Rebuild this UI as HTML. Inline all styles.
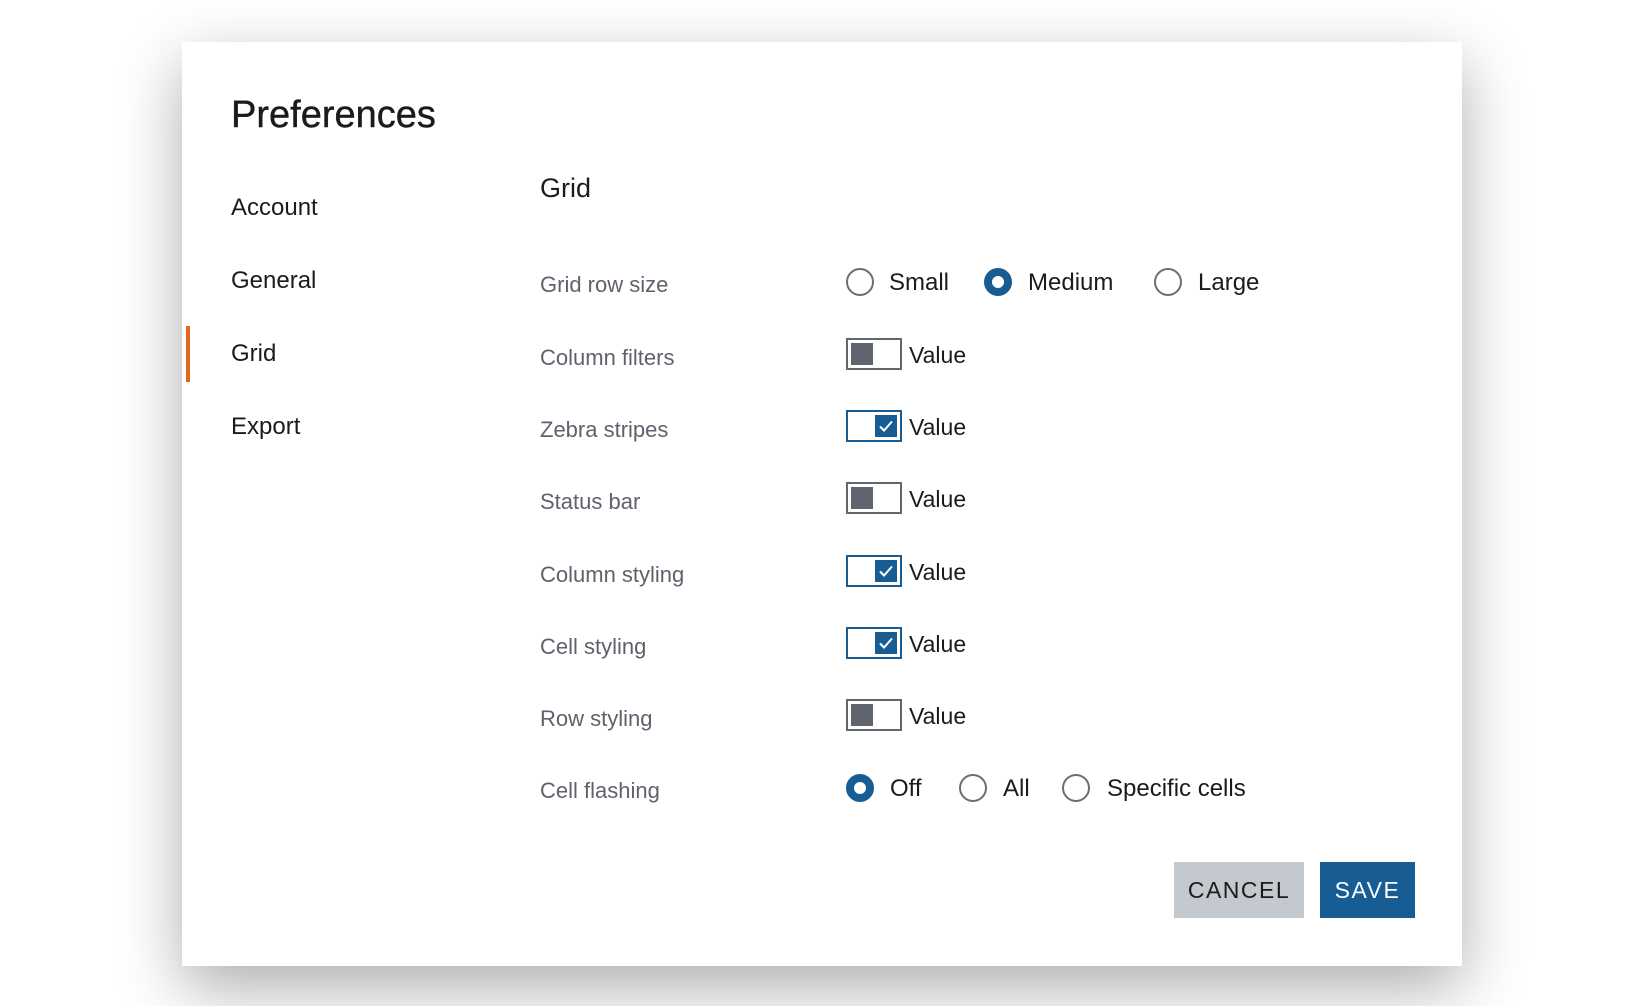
<!DOCTYPE html>
<html><head><meta charset="utf-8"><style>
body{margin:0;width:1646px;height:1006px;background:#fff;font-family:"Liberation Sans",sans-serif;position:relative;overflow:hidden}
.dlg{position:absolute;left:182px;top:42px;width:1280px;height:924px;background:#fff;box-shadow:0 22px 60px rgba(0,0,0,.32)}
.a{position:absolute;white-space:nowrap}
.nav{font-size:24px;color:#1b1b1b;left:231px}
.lbl{font-size:22px;color:#5d626c;left:540px}
.opt{font-size:24px;color:#1b1b1b}
.r{position:absolute;width:24px;height:24px;border:2px solid #6a6e76;border-radius:50%}
.r.on{border:8px solid #175d93;width:12px;height:12px}
.t{position:absolute;left:850px;width:52px;height:28px;border:2px solid #62666f}
.t i{position:absolute;left:3px;top:3px;width:22px;height:22px;background:#5f646e}
.t.on{border-color:#175d93}
.t.on i{left:27px;background:#175d93}
.btn{position:absolute;top:862px;height:56px;font-size:23px;letter-spacing:1.5px;line-height:56px;text-align:center}
</style></head><body>
<div class="dlg"></div>
<div class="a" style="left:231px;top:94px;font-size:38px;color:#1b1b1b;-webkit-text-stroke:0.4px #1b1b1b">Preferences</div>
<div class="a nav" style="top:194px">Account</div>
<div class="a nav" style="top:267px">General</div>
<div class="a nav" style="top:340px">Grid</div>
<div class="a nav" style="top:413px">Export</div>
<div class="a" style="left:186px;top:326px;width:4px;height:56px;background:#e2661c"></div>
<div class="a" style="left:540px;top:173px;font-size:27px;color:#1b1b1b">Grid</div>

<div class="a lbl" style="top:272px">Grid row size</div>
<div class="a lbl" style="top:345px">Column filters</div>
<div class="a lbl" style="top:417px">Zebra stripes</div>
<div class="a lbl" style="top:489px">Status bar</div>
<div class="a lbl" style="top:562px">Column styling</div>
<div class="a lbl" style="top:634px">Cell styling</div>
<div class="a lbl" style="top:706px">Row styling</div>
<div class="a lbl" style="top:778px">Cell flashing</div>

<div class="r" style="left:846px;top:268px"></div><div class="a opt" style="left:889px;top:269px">Small</div>
<div class="r on" style="left:984px;top:268px"></div><div class="a opt" style="left:1028px;top:269px">Medium</div>
<div class="r" style="left:1154px;top:268px"></div><div class="a opt" style="left:1198px;top:269px">Large</div>

<div class="t" style="top:338px;left:846px"><i></i></div><div class="a opt" style="left:909px;top:342px;font-size:23px">Value</div>
<div class="t on" style="top:410px;left:846px"><i><svg width="22" height="22"><path d="M5 11.5l4 4 8-9" stroke="#fff" stroke-width="2" fill="none"/></svg></i></div><div class="a opt" style="left:909px;top:414px;font-size:23px">Value</div>
<div class="t" style="top:482px;left:846px"><i></i></div><div class="a opt" style="left:909px;top:486px;font-size:23px">Value</div>
<div class="t on" style="top:555px;left:846px"><i><svg width="22" height="22"><path d="M5 11.5l4 4 8-9" stroke="#fff" stroke-width="2" fill="none"/></svg></i></div><div class="a opt" style="left:909px;top:559px;font-size:23px">Value</div>
<div class="t on" style="top:627px;left:846px"><i><svg width="22" height="22"><path d="M5 11.5l4 4 8-9" stroke="#fff" stroke-width="2" fill="none"/></svg></i></div><div class="a opt" style="left:909px;top:631px;font-size:23px">Value</div>
<div class="t" style="top:699px;left:846px"><i></i></div><div class="a opt" style="left:909px;top:703px;font-size:23px">Value</div>

<div class="r on" style="left:846px;top:774px"></div><div class="a opt" style="left:890px;top:775px">Off</div>
<div class="r" style="left:959px;top:774px"></div><div class="a opt" style="left:1003px;top:775px">All</div>
<div class="r" style="left:1062px;top:774px"></div><div class="a opt" style="left:1107px;top:775px">Specific cells</div>

<div class="btn" style="left:1174px;width:130px;background:#c4c8cf;color:#1b1b1b">CANCEL</div>
<div class="btn" style="left:1320px;width:95px;background:#175d93;color:#fff">SAVE</div>
</body></html>
